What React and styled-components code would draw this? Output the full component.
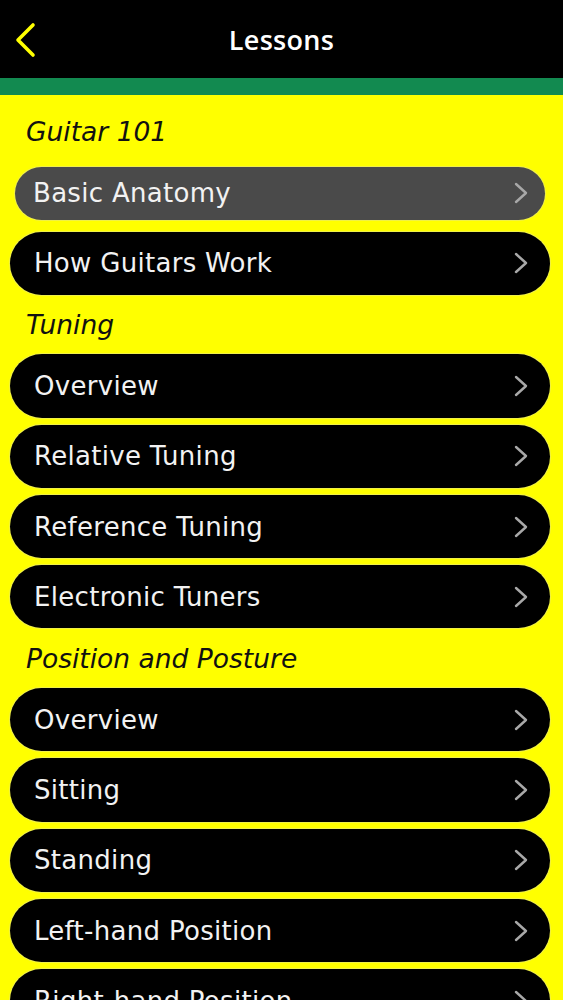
import React from 'react';
import styled, { createGlobalStyle } from 'styled-components';

const GlobalStyle = createGlobalStyle`
  html, body {
    margin: 0;
    padding: 0;
    background: #ffff00;
  }
  body {
    font-family: "DejaVu Sans", "Open Sans", sans-serif;
  }
`;

const Screen = styled.div`
  width: 563px;
  height: 1000px;
  overflow: hidden;
  background: #ffff00;
  display: flex;
  flex-direction: column;
`;

const NavBar = styled.div`
  height: 78px;
  background: #000000;
  display: flex;
  align-items: center;
  justify-content: center;
  position: relative;
  flex-shrink: 0;
`;

const BackButton = styled.div`
  position: absolute;
  left: 13px;
  top: 21px;
  width: 26px;
  height: 38px;
  display: flex;
  align-items: center;
`;

const NavTitle = styled.h1`
  margin: 0;
  color: #ffffff;
  font-size: 27px;
  font-weight: 600;
  font-family: "Open Sans", "DejaVu Sans", sans-serif;
  letter-spacing: 0.3px;
`;

const GreenStripe = styled.div`
  height: 17px;
  background: #128a50;
  flex-shrink: 0;
`;

const List = styled.div`
  display: flex;
  flex-direction: column;
  gap: 7px;
  padding: 14px 13px 0 10px;
`;

const SectionTitle = styled.div`
  height: 45.5px;
  display: flex;
  align-items: center;
  padding-left: 16px;
  font-style: italic;
  font-size: 26.5px;
  color: #111111;
`;

const Row = styled.div`
  height: ${p => (p.$pressed ? 53 : 63.3)}px;
  margin: ${p => (p.$pressed ? '5px 5px' : '0')};
  border-radius: 32px;
  background: ${p => (p.$pressed ? '#4a4a4a' : '#000000')};
  box-shadow: 0 0 0 1px rgba(230, 230, 120, 0.6);
  display: flex;
  align-items: center;
  justify-content: space-between;
  padding: 0 ${p => (p.$pressed ? 17 : 22)}px 0 ${p => (p.$pressed ? 18 : 24)}px;
`;

const RowLabel = styled.span`
  color: #f2f2f2;
  font-size: 26px;
  letter-spacing: 0.3px;
`;

const Chevron = () => (
  <svg width="14" height="22" viewBox="0 0 14 22">
    <path d="M2 2 L12 11 L2 20" fill="none" stroke="#a8a8a8" strokeWidth="2.4" strokeLinecap="round" strokeLinejoin="round" />
  </svg>
);

const sections = [
  { title: 'Guitar 101', items: ['Basic Anatomy', 'How Guitars Work'] },
  { title: 'Tuning', items: ['Overview', 'Relative Tuning', 'Reference Tuning', 'Electronic Tuners'] },
  {
    title: 'Position and Posture',
    items: ['Overview', 'Sitting', 'Standing', 'Left-hand Position', 'Right-hand Position', 'Picking'],
  },
];

export default function App() {
  return (
    <Screen>
      <GlobalStyle />
      <NavBar>
        <BackButton>
          <svg width="24" height="36" viewBox="0 0 24 36">
            <path d="M20 3 L5 18 L20 33" fill="none" stroke="#ffff00" strokeWidth="3.6" strokeLinecap="round" strokeLinejoin="round" />
          </svg>
        </BackButton>
        <NavTitle>Lessons</NavTitle>
      </NavBar>
      <GreenStripe />
      <List>
        {sections.map(section => (
          <React.Fragment key={section.title}>
            <SectionTitle>{section.title}</SectionTitle>
            {section.items.map(item => (
              <Row key={item} $pressed={item === 'Basic Anatomy'}>
                <RowLabel>{item}</RowLabel>
                <Chevron />
              </Row>
            ))}
          </React.Fragment>
        ))}
      </List>
    </Screen>
  );
}
